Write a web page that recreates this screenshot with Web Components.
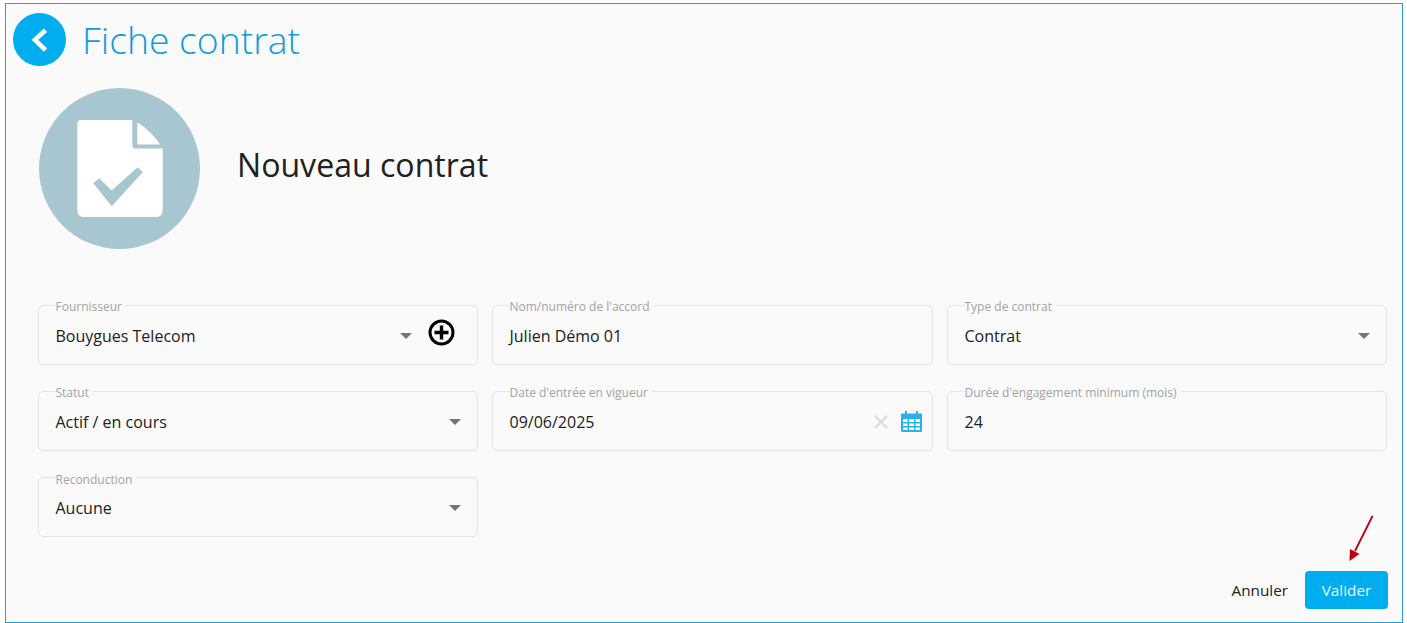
<!DOCTYPE html>
<html lang="fr">
<head>
<meta charset="utf-8">
<title>Fiche contrat</title>
<style>
  html, body { margin: 0; background: #fff; }
  body { padding: 3px 4px 0 5px; font-family: "Open Sans", "Noto Sans", sans-serif; color: #212121; }
</style>
</head>
<body>
<contract-page>
  <page-header slot="header" title="Fiche contrat"></page-header>
  <contract-hero slot="hero" name="Nouveau contrat"></contract-hero>
  <form-field label="Fournisseur" value="Bouygues Telecom" kind="select-add"></form-field>
  <form-field label="Nom/numéro de l'accord" value="Julien Démo 01"></form-field>
  <form-field label="Type de contrat" value="Contrat" kind="select"></form-field>
  <form-field label="Statut" value="Actif / en cours" kind="select"></form-field>
  <form-field label="Date d'entrée en vigueur" value="09/06/2025" kind="date"></form-field>
  <form-field label="Durée d'engagement minimum (mois)" value="24"></form-field>
  <form-field label="Reconduction" value="Aucune" kind="select"></form-field>
  <form-actions slot="actions"></form-actions>
</contract-page>

<script>
class ContractPage extends HTMLElement {
  constructor() {
    super();
    this.attachShadow({ mode: 'open' }).innerHTML = `
      <style>
        :host {
          display: block;
          box-sizing: border-box;
          width: 1398px;
          height: 620px;
          border: 1px solid #2a9fd2;
          background: #fafafa;
        }
        .form {
          display: grid;
          grid-template-columns: 440px 441px 440px;
          column-gap: 14px;
          row-gap: 20.3px;
          margin: 49.6px 15px 0 32px;
        }
      </style>
      <slot name="header"></slot>
      <slot name="hero"></slot>
      <div class="form"><slot></slot></div>
      <slot name="actions"></slot>
    `;
  }
}

class PageHeader extends HTMLElement {
  constructor() {
    super();
    this.attachShadow({ mode: 'open' }).innerHTML = `
      <style>
        :host { display: flex; align-items: center; gap: 16px; padding: 9px 0 0 7px; height: 53px; }
        .back {
          width: 53px; height: 53px; border-radius: 50%;
          background: #00aeef;
          display: flex; align-items: center; justify-content: center;
        }
        h1 { margin: -1px 0 0; font-size: 37.3px; font-weight: 300; color: #0e9cdc; line-height: 53px; }
      </style>
      <div class="back">
        <svg width="18" height="26" viewBox="0 0 18 26"><path d="M14.500 3.300 L3.900 12.800 L14.500 23" fill="none" stroke="#fff" stroke-width="4.600"/></svg>
      </div>
      <h1></h1>
    `;
    this.shadowRoot.querySelector('h1').textContent = this.getAttribute('title');
  }
}

class ContractHero extends HTMLElement {
  constructor() {
    super();
    this.attachShadow({ mode: 'open' }).innerHTML = `
      <style>
        :host { display: flex; align-items: center; gap: 37px; padding: 22px 0 0 33px; }
        .round {
          width: 161px; height: 161px; border-radius: 50%;
          background: #a8c6d0;
          display: flex; align-items: center; justify-content: center;
        }
        h2 { margin: -9px 0 0; font-size: 32.1px; font-weight: 400; color: #212121; }
      </style>
      <div class="round">
        <svg width="87" height="98" viewBox="0 0 87 98">
          <path d="M5 0H56.300V25.500A3 3 0 0 0 59.300 28.500H86.700V91A6 6 0 0 1 80.700 97H7.300A6 6 0 0 1 1.300 91V4A4 4 0 0 1 5 0Z" fill="#fff"/>
          <path d="M61.300 2.200 C70 8 78 15 84 24.500 H61.300 Z" fill="#fff"/>
          <path d="M17.300 63.200 L23.300 58.200 L35.700 70.500 L61.700 47.200 L66.700 52.200 L35.700 86.200 Z" fill="#a8c6d0"/>
        </svg>
      </div>
      <h2></h2>
    `;
    this.shadowRoot.querySelector('h2').textContent = this.getAttribute('name');
  }
}

class FormField extends HTMLElement {
  constructor() {
    super();
    const kind = this.getAttribute('kind') || '';
    const caret = '<span class="caret"></span>';
    let tail = '';
    if (kind === 'select') tail = caret;
    if (kind === 'select-add') {
      tail = caret + `
        <svg class="add" width="27" height="27" viewBox="0 0 27 27">
          <circle cx="13.5" cy="13.5" r="11.5" fill="none" stroke="#000" stroke-width="3"/>
          <path d="M13.5 6.5V20.5M6.5 13.5H20.5" stroke="#000" stroke-width="3.4"/>
        </svg>`;
    }
    if (kind === 'date') {
      tail = `
        <svg class="clear" width="14" height="14" viewBox="0 0 14 14"><path d="M1 1L13 13M13 1L1 13" stroke="#dcdcdc" stroke-width="2.4"/></svg>
        <svg class="cal" width="23" height="23" viewBox="0 0 23 23">
          <path d="M1 3.5H22V20.5A1.5 1.5 0 0 1 20.5 22H2.5A1.5 1.5 0 0 1 1 20.5Z" fill="#2ab0ee"/>
          <path d="M6 1V5M17 1V5" stroke="#2ab0ee" stroke-width="2"/>
          <path d="M3 9H7.5V12H3ZM9 9H14V12H9ZM15.500 9H20V12H15.500ZM3 13.500H7.500V16H3ZM9 13.500H14V16H9ZM15.500 13.500H20V16H15.500ZM3 17.500H7.500V20H3ZM9 17.500H14V20H9ZM15.500 17.500H20V20H15.500Z" fill="#fff"/>
        </svg>`;
    }
    this.attachShadow({ mode: 'open' }).innerHTML = `
      <style>
        :host { display: block; }
        fieldset {
          box-sizing: border-box;
          height: 66px;
          margin: 0;
          padding: 0 14px 0 16.5px;
          border: 1px solid #e4e4e4;
          border-radius: 5px;
          display: flex;
          align-items: center;
          min-width: 0;
        }
        legend {
          padding: 0;
          font-size: 12px;
          line-height: 13px;
          color: #a3a3a3;
          padding-right: 4px;
          position: relative;
          top: 1.5px;
        }
        .row { display: flex; align-items: center; width: 100%; height: 100%; margin-top: -4px; }
        .value { flex: 1; font-size: 16px; color: #212121; }
        .caret {
          width: 0; height: 0;
          border-left: 6px solid transparent;
          border-right: 6px solid transparent;
          border-top: 6px solid #757575;
          margin-right: 2px;
        }
        .add { margin: -6.500px 8.500px 0 13.500px; }
        .clear { margin-right: 11.500px; }
        .cal { margin: 0 -4.500px 0 0; }
      </style>
      <fieldset>
        <legend></legend>
        <div class="row"><span class="value"></span>${tail}</div>
      </fieldset>
    `;
    this.shadowRoot.querySelector('legend').textContent = this.getAttribute('label');
    this.shadowRoot.querySelector('.value').textContent = this.getAttribute('value');
  }
}

class FormActions extends HTMLElement {
  constructor() {
    super();
    this.attachShadow({ mode: 'open' }).innerHTML = `
      <style>
        :host { display: flex; justify-content: flex-end; align-items: center; gap: 17px; padding: 34px 14px 0 0; position: relative; }
        .cancel { font-size: 15.3px; color: #212121; }
        .ok {
          box-sizing: border-box; width: 83px; height: 38px;
          border-radius: 4px;
          background: #00aeef; color: #e8f7fd;
          font-size: 15.3px;
          display: flex; align-items: center; justify-content: center;
        }
        .arrow { position: absolute; right: 27px; top: -22px; }
      </style>
      <span class="cancel">Annuler</span>
      <span class="ok">Valider</span>
      <svg class="arrow" width="28" height="48" viewBox="0 0 28 48">
        <path d="M25.500 1 L8 36" stroke="#b8000f" stroke-width="1.800" fill="none"/>
        <path d="M2.500 46 L3 34 L12.500 39 Z" fill="#b8000f"/>
      </svg>
    `;
  }
}

customElements.define('contract-page', ContractPage);
customElements.define('page-header', PageHeader);
customElements.define('contract-hero', ContractHero);
customElements.define('form-field', FormField);
customElements.define('form-actions', FormActions);
</script>
</body>
</html>
